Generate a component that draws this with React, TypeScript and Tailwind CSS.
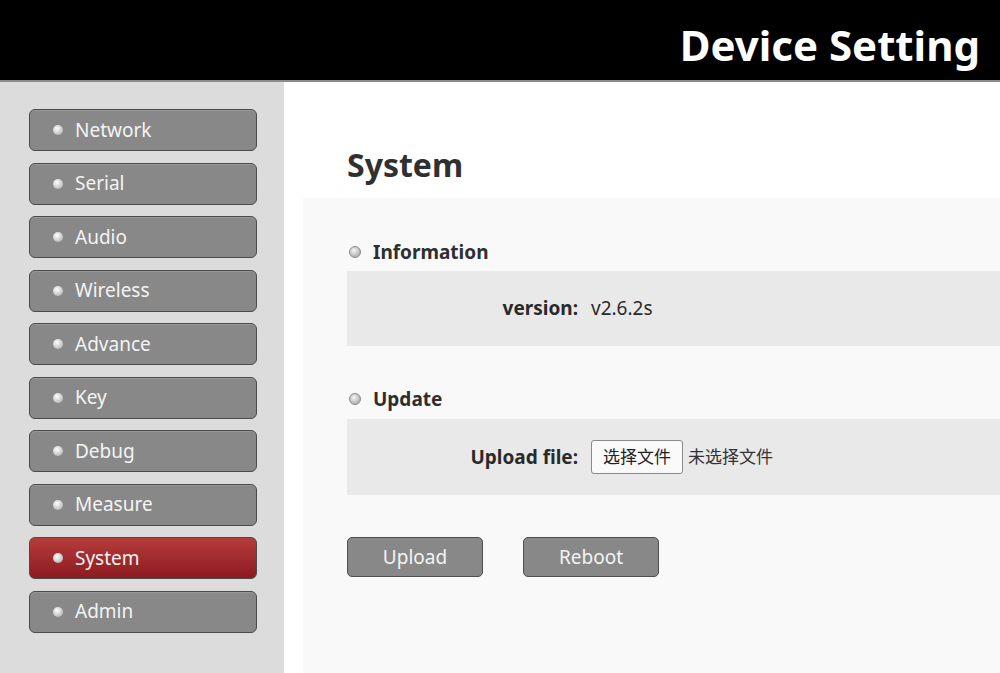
const font = { fontFamily: '"Noto Sans", "Noto Sans CJK SC", sans-serif' };

const menu = ["Network", "Serial", "Audio", "Wireless", "Advance", "Key", "Debug", "Measure", "System", "Admin"];

function Dot({ big }: { big?: boolean }) {
  return big ? (
    <span className="inline-block h-[12px] w-[12px] rounded-full border border-[#8a8a8a] bg-[radial-gradient(circle_at_40%_35%,#f4f4f4,#b4b4b4_70%)]" />
  ) : (
    <span className="inline-block h-[10px] w-[10px] rounded-full bg-[radial-gradient(circle_at_40%_35%,#ffffff,#c8c8c8_60%,#a8a8a8)]" />
  );
}

function NavItem({ label, active }: { label: string; active?: boolean }) {
  return (
    <div
      className={
        "flex h-[42px] w-[228px] items-center gap-[12px] rounded-[6px] border border-[#4a4a4a] pl-[23px] text-[19px] text-[#f4f4f4] " +
        (active
          ? "bg-gradient-to-b from-[#b63c3c] to-[#8c1a20]"
          : "bg-[#888888] shadow-[inset_0_1px_0_rgba(255,255,255,0.15)]")
      }
    >
      <Dot />
      <span>{label}</span>
    </div>
  );
}

function Row({ label, children }: { label: string; children: React.ReactNode }) {
  return (
    <div className="flex items-center bg-[#e9e9ea]">
      <div className="w-[231px] text-right text-[19px] font-bold text-[#2a2a2a]">{label}</div>
      <div className="ml-[13px] flex items-center">{children}</div>
    </div>
  );
}

function SectionTitle({ title }: { title: string }) {
  return (
    <div className="flex h-[28px] items-center gap-[12px] pl-[2px] text-[19px] font-bold text-[#2e2e2e]">
      <Dot big />
      <span>{title}</span>
    </div>
  );
}

function ActionButton({ label }: { label: string }) {
  return (
    <div className="flex h-[40px] w-[136px] items-center justify-center rounded-[5px] border border-[#4f4f4f] bg-[#888888] text-[19px] text-[#f4f4f4]">
      {label}
    </div>
  );
}

export default function App() {
  return (
    <div className="flex h-[673px] w-[1000px] flex-col overflow-hidden bg-white" style={font}>
      <header className="flex h-[82px] shrink-0 items-center justify-end border-b-2 border-[#8c8c8c] bg-black pr-[20px] pt-[10px]">
        <h1 className="text-[42px] font-bold leading-none text-white">Device Setting</h1>
      </header>

      <div className="flex flex-1">
        <aside className="flex w-[284px] flex-col gap-[11.5px] bg-[#dcdcdc] pl-[29px] pt-[27px]">
          {menu.map((m) => (
            <NavItem key={m} label={m} active={m === "System"} />
          ))}
        </aside>

        <main className="flex flex-1 flex-col pl-[19px]">
          <h2 className="ml-[44px] mt-[63px] h-[40px] text-[32px] font-bold leading-[40px] text-[#303030]">System</h2>

          <section className="mt-[13px] flex flex-1 flex-col bg-[#f9f9f9] pl-[44px] pt-[40px]">
            <SectionTitle title="Information" />
            <div className="mt-[5px] h-[75px]">
              <Row label="version:">
                <span className="flex h-[75px] items-center text-[19px] text-[#2a2a2a]">v2.6.2s</span>
              </Row>
            </div>

            <div className="mt-[39px]">
              <SectionTitle title="Update" />
            </div>
            <div className="mt-[6px] h-[76px]">
              <Row label="Upload file:">
                <div className="flex h-[76px] items-center">
                  <span className="flex h-[34px] w-[92px] items-center justify-center rounded-[3px] border border-[#8a8a8a] bg-[#fafafa] text-[17px] text-[#222]">
                    选择文件
                  </span>
                  <span className="ml-[5px] text-[17px] text-[#333]">未选择文件</span>
                </div>
              </Row>
            </div>

            <div className="mt-[42px] flex gap-[40px]">
              <ActionButton label="Upload" />
              <ActionButton label="Reboot" />
            </div>
          </section>
        </main>
      </div>
    </div>
  );
}
